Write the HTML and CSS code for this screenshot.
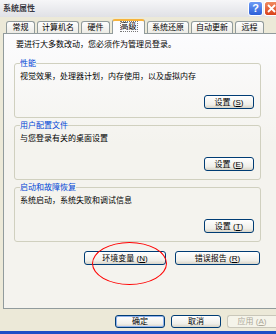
FILE: index.html
```html
<!DOCTYPE html>
<html lang="zh-CN">
<head>
	<meta charset="UTF-8">
	<title>系统属性</title>
	<link rel="stylesheet" href="styles.css">
</head>
<body>
	<div class="window">
		<div class="titlebar">
			<span class="title">系统属性</span>
			<span class="capbtn help">?</span>
			<span class="capbtn close">
				<svg width="9" height="9" viewBox="0 0 9 9"><path d="M1 1L8 8M8 1L1 8" stroke="#fff" stroke-width="1.8"/></svg>
			</span>
		</div>
		<div class="tabs">
			<span class="tab">常规</span>
			<span class="tab">计算机名</span>
			<span class="tab">硬件</span>
			<span class="tab active"><i>高级</i></span>
			<span class="tab">系统还原</span>
			<span class="tab">自动更新</span>
			<span class="tab">远程</span>
		</div>
		<div class="panel">
			<div class="col">
				<p class="intro">要进行大多数改动，您必须作为管理员登录。</p>
				<fieldset class="group first">
					<legend>性能</legend>
					<p>视觉效果，处理器计划，内存使用，以及虚拟内存</p>
					<div class="row"><button class="btn">设置 (<u>S</u>)</button></div>
				</fieldset>
				<fieldset class="group">
					<legend>用户配置文件</legend>
					<p>与您登录有关的桌面设置</p>
					<div class="row"><button class="btn">设置 (<u>E</u>)</button></div>
				</fieldset>
				<fieldset class="group">
					<legend>启动和故障恢复</legend>
					<p>系统启动，系统失败和调试信息</p>
					<div class="row"><button class="btn">设置 (<u>T</u>)</button></div>
				</fieldset>
				<div class="row env">
					<button class="btn env-btn">环境变量 (<u>N</u>)</button>
					<button class="btn err-btn">错误报告 (<u>R</u>)</button>
				</div>
			</div>
		</div>
		<div class="footer">
			<button class="btn ok">确定</button>
			<button class="btn">取消</button>
			<button class="btn" disabled>应用 (<u>A</u>)</button>
		</div>
		<div class="mark"></div>
	</div>
</body>
</html>
```

FILE: styles.css
```css
html,body{margin:0;padding:0;overflow:hidden;}
body{width:276px;height:334px;font-family:"Liberation Sans","Noto Sans CJK SC",sans-serif;font-size:8px;color:#000;}
p{margin:0;}

.window{position:relative;width:276px;height:334px;overflow:hidden;box-sizing:border-box;background:#ece9d8;border-bottom:3px solid #1c4ec6;}

.titlebar{display:flex;align-items:center;height:17px;padding:0 0 0 3px;box-sizing:border-box;background:linear-gradient(#f6f6f8,#e0e1e6);}
.title{font-weight:bold;font-size:8px;line-height:10px;color:#3a3a44;text-shadow:0 0 1px #fff;}
.capbtn{display:flex;align-items:center;justify-content:center;width:15px;height:15px;box-sizing:border-box;border:1px solid #fff;border-radius:3px;color:#fff;font-weight:bold;font-size:11px;line-height:13px;}
.help{margin-left:auto;background:linear-gradient(#6e9cf5,#2c5fd8);}
.close{width:12px;margin-left:1px;border-right:none;border-radius:3px 0 0 3px;justify-content:flex-end;overflow:hidden;background:linear-gradient(#f08a60,#d9411b);}

.tabs{display:flex;align-items:flex-end;gap:2px;height:16px;padding-left:6px;box-sizing:border-box;}
.tab{min-width:29px;height:12px;padding:0 4px;box-sizing:border-box;border:1px solid #919b9c;border-bottom:none;border-radius:3px 3px 0 0;background:linear-gradient(#fefefe,#ecebe5);line-height:11px;text-align:center;}
.tab.active{position:relative;z-index:1;width:33px;height:15px;margin-bottom:-1px;border-top:2px solid #f6b33c;background:#fcfcfe;line-height:12px;}
.tab.active i{font-style:normal;outline:1px dotted #777;}

.panel{width:280px;height:276px;margin-left:3px;padding:6px 0 0 10px;box-sizing:border-box;border:1px solid #919b9c;border-right:none;background:linear-gradient(#fcfcfe,#f4f3ee 40%);}
.col{width:247px;}
.intro{padding-left:2px;line-height:10px;}

.group{margin:3px 0 0;padding:4px 6px 8px 5px;min-inline-size:0;border:1px solid #d0d0bf;border-radius:3px;}
.group.first{margin-top:9px;}
.group legend{padding:0;line-height:9px;color:#0046d5;}
.group p{line-height:10px;}

.row{display:flex;justify-content:flex-end;margin-top:13px;}
.row.env{gap:9px;margin-top:9px;padding-right:1px;}

.btn{width:50px;height:14px;padding:0;box-sizing:border-box;border:1px solid #003c74;border-radius:3px;background:linear-gradient(#ffffff,#f0efea 70%,#d8d4c8);font-family:inherit;font-size:8px;line-height:11px;color:#000;white-space:nowrap;}
.btn u{text-decoration:underline;}
.env-btn{width:82px;}
.err-btn{width:85px;}
.btn.ok{box-shadow:inset 0 0 0 1px #8fb2ec;}
.btn:disabled{border-color:#c9c7ba;color:#aca899;background:#f5f4ea;}

.footer{display:flex;justify-content:flex-end;gap:6px;margin-top:6px;}
.footer .btn{height:13px;line-height:10px;}
.footer .btn:disabled{width:49px;border-right:none;border-radius:3px 0 0 3px;}

.mark{position:absolute;left:92px;top:242px;width:75px;height:43px;box-sizing:border-box;border:1px solid #f00;border-radius:50%;}
```
